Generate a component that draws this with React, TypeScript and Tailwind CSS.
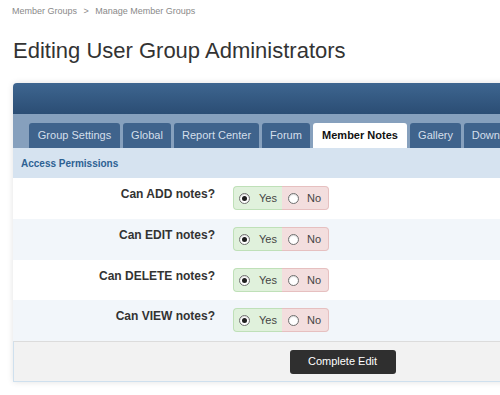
import React from "react";

const tabs = [
  { label: "Group Settings", w: "w-[91px]" },
  { label: "Global", w: "w-[48px]" },
  { label: "Report Center", w: "w-[85px]" },
  { label: "Forum", w: "w-[48px]" },
  { label: "Member Notes", w: "w-[94px]", active: true },
  { label: "Gallery", w: "w-[51px]" },
  { label: "Downloads", w: "w-[70px]" },
];

const rows = ["Can ADD notes?", "Can EDIT notes?", "Can DELETE notes?", "Can VIEW notes?"];

function Radio({ checked }: { checked: boolean }) {
  return (
    <span className="w-[11px] h-[11px] shrink-0 rounded-full border border-[#6f6f6f] bg-white flex items-center justify-center shadow-[inset_0_1px_1px_rgba(0,0,0,0.15)]">
      {checked && <span className="w-[5px] h-[5px] rounded-full bg-[#1e1e1e]" />}
    </span>
  );
}

export default function App() {
  return (
    <div className="w-[500px] h-[395px] overflow-hidden bg-white font-['Liberation_Sans',Arial,sans-serif] text-[#333]">
      <div className="pl-[12px] pt-[5px] text-[9px] leading-[12px] text-[#8a8a8a]">
        Member Groups <span className="mx-[4px]">&gt;</span> Manage Member Groups
      </div>
      <h1 className="pl-[13px] mt-[21px] text-[22px] leading-[26px] text-[#333]">
        Editing User Group Administrators
      </h1>
      <div className="ml-[13px] mt-[19px] w-[658px] rounded-t-[4px] shadow-[0_0_6px_rgba(0,0,0,0.12)] border-b border-[#cfe0ee]">
        <div className="h-[31px] rounded-t-[4px] bg-gradient-to-b from-[#3e6690] to-[#2b4d74]" />
        <div className="h-[34px] bg-[#86a0bd] flex items-end gap-[3px] pl-[16px]">
          {tabs.map((t) => (
            <div
              key={t.label}
              className={`${t.w} h-[25px] shrink-0 rounded-t-[3px] flex items-center justify-center text-[11px] whitespace-nowrap ${
                t.active
                  ? "bg-white text-[#111] font-bold"
                  : "bg-[#3f638c] text-[#d4dfeb]"
              }`}
            >
              {t.label}
            </div>
          ))}
        </div>
        <div className="h-[30px] bg-[#d6e3f0] flex items-center pl-[8px] text-[10px] font-bold text-[#2d6193]">
          Access Permissions
        </div>
        {rows.map((r, i) => (
          <div
            key={r}
            className={`flex items-start pt-[8px] ${i % 2 === 1 ? "bg-[#f2f6fa]" : "bg-white"} ${i === 2 ? "h-[40px]" : "h-[41px]"}`}
          >
            <div className="w-[202px] text-right text-[12px] leading-[16px] font-bold text-[#333]">{r}</div>
            <div className="ml-[18px] flex h-[24px] text-[11px] text-[#444]">
              <div className="w-[49px] flex items-center gap-[9px] pl-[5px] bg-[#e0f1dc] border border-[#bfe0b8] border-r-0 rounded-l-[4px]">
                <Radio checked />
                <span>Yes</span>
              </div>
              <div className="w-[47px] flex items-center gap-[8px] pl-[6px] bg-[#f3dede] border border-[#e6c0c0] border-l-0 rounded-r-[4px]">
                <Radio checked={false} />
                <span>No</span>
              </div>
            </div>
          </div>
        ))}
        <div className="h-[40px] bg-[#f2f2f2] border-t border-[#dcdcdc] border-l border-l-[#cfe0ee] flex items-center justify-center">
          <div className="w-[106px] h-[24px] rounded-[3px] bg-[#2f2f2f] text-white text-[11px] flex items-center justify-center">
            Complete Edit
          </div>
        </div>
      </div>
    </div>
  );
}
